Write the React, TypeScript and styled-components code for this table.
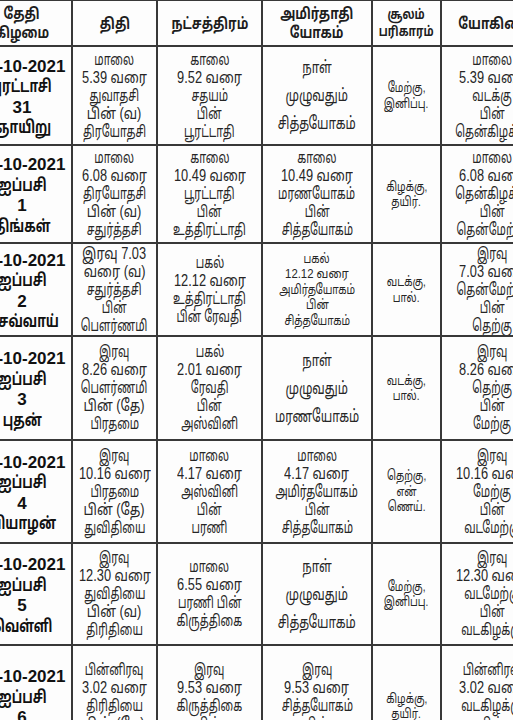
import { FC } from 'react';
import styled, { createGlobalStyle } from 'styled-components';

type Size = 'sm' | 'md' | 'lg';

interface CellText {
  lines: string[];
  size?: Size;
}

interface Day {
  date: string[];
  thithi: CellText;
  star: CellText;
  yogam: CellText;
  sulam: CellText;
  yogini: CellText;
}

const days: Day[] = [
  {
    date: ['17-10-2021', 'புரட்டாசி', '31', 'ஞாயிறு'],
    thithi: { lines: ['மாலை', '5.39 வரை', 'துவாதசி', 'பின் (வ)', 'திரயோதசி'] },
    star: { lines: ['காலை', '9.52 வரை', 'சதயம்', 'பின்', 'பூரட்டாதி'] },
    yogam: { lines: ['நாள்', 'முழுவதும்', 'சித்தயோகம்'], size: 'lg' },
    sulam: { lines: ['மேற்கு,', 'இனிப்பு.'], size: 'sm' },
    yogini: { lines: ['மாலை', '5.39 வரை', 'வடக்கு', 'பின்', 'தென்கிழக்கு'] }
  },
  {
    date: ['18-10-2021', 'ஐப்பசி', '1', 'திங்கள்'],
    thithi: { lines: ['மாலை', '6.08 வரை', 'திரயோதசி', 'பின் (வ)', 'சதுர்த்தசி'] },
    star: { lines: ['காலை', '10.49 வரை', 'பூரட்டாதி', 'பின்', 'உத்திரட்டாதி'] },
    yogam: { lines: ['காலை', '10.49 வரை', 'மரணயோகம்', 'பின்', 'சித்தயோகம்'] },
    sulam: { lines: ['கிழக்கு,', 'தயிர்.'], size: 'sm' },
    yogini: { lines: ['மாலை', '6.08 வரை', 'தென்கிழக்கு', 'பின்', 'தென்மேற்கு'] }
  },
  {
    date: ['19-10-2021', 'ஐப்பசி', '2', 'செவ்வாய்'],
    thithi: { lines: ['இரவு 7.03', 'வரை (வ)', 'சதுர்த்தசி', 'பின்', 'பௌர்ணமி'] },
    star: { lines: ['பகல்', '12.12 வரை', 'உத்திரட்டாதி', 'பின் ரேவதி'] },
    yogam: { lines: ['பகல்', '12.12 வரை', 'அமிர்தயோகம்', 'பின்', 'சித்தயோகம்'], size: 'sm' },
    sulam: { lines: ['வடக்கு,', 'பால்.'], size: 'sm' },
    yogini: { lines: ['இரவு', '7.03 வரை', 'தென்மேற்கு', 'பின்', 'தெற்கு'] }
  },
  {
    date: ['20-10-2021', 'ஐப்பசி', '3', 'புதன்'],
    thithi: { lines: ['இரவு', '8.26 வரை', 'பௌர்ணமி', 'பின் (தே)', 'பிரதமை'] },
    star: { lines: ['பகல்', '2.01 வரை', 'ரேவதி', 'பின்', 'அஸ்வினி'] },
    yogam: { lines: ['நாள்', 'முழுவதும்', 'மரணயோகம்'], size: 'lg' },
    sulam: { lines: ['வடக்கு,', 'பால்.'], size: 'sm' },
    yogini: { lines: ['இரவு', '8.26 வரை', 'தெற்கு', 'பின்', 'மேற்கு'] }
  },
  {
    date: ['21-10-2021', 'ஐப்பசி', '4', 'வியாழன்'],
    thithi: { lines: ['இரவு', '10.16 வரை', 'பிரதமை', 'பின் (தே)', 'துவிதியை'] },
    star: { lines: ['மாலை', '4.17 வரை', 'அஸ்வினி', 'பின்', 'பரணி'] },
    yogam: { lines: ['மாலை', '4.17 வரை', 'அமிர்தயோகம்', 'பின்', 'சித்தயோகம்'] },
    sulam: { lines: ['தெற்கு,', 'என்', 'ணெய்.'], size: 'sm' },
    yogini: { lines: ['இரவு', '10.16 வரை', 'மேற்கு', 'பின்', 'வடமேற்கு'] }
  },
  {
    date: ['22-10-2021', 'ஐப்பசி', '5', 'வெள்ளி'],
    thithi: { lines: ['இரவு', '12.30 வரை', 'துவிதியை', 'பின் (வ)', 'திரிதியை'] },
    star: { lines: ['மாலை', '6.55 வரை', 'பரணி பின்', 'கிருத்திகை'] },
    yogam: { lines: ['நாள்', 'முழுவதும்', 'சித்தயோகம்'], size: 'lg' },
    sulam: { lines: ['மேற்கு,', 'இனிப்பு.'], size: 'sm' },
    yogini: { lines: ['இரவு', '12.30 வரை', 'வடமேற்கு', 'பின்', 'வடகிழக்கு'] }
  },
  {
    date: ['23-10-2021', 'ஐப்பசி', '6', 'சனி'],
    thithi: { lines: ['பின்னிரவு', '3.02 வரை', 'திரிதியை', 'பின் (தே)', 'சதுர்த்தி'] },
    star: { lines: ['இரவு', '9.53 வரை', 'கிருத்திகை', 'பின்', 'ரோகிணி'] },
    yogam: { lines: ['இரவு', '9.53 வரை', 'சித்தயோகம்', 'பின்', 'மரணயோகம்'] },
    sulam: { lines: ['கிழக்கு,', 'தயிர்.'], size: 'sm' },
    yogini: { lines: ['பின்னிரவு', '3.02 வரை', 'வடகிழக்கு', 'பின்', 'கிழக்கு'] }
  }
];

// the print uses a condensed Tamil face; lines with digits are squeezed less
const hasDigits = (s: string) => /[0-9()]/.test(s);
const isLatin = (s: string) => /^[0-9\-. ]+$/.test(s);

const squeeze: Record<Size, [number, number]> = {
  sm: [0.74, 0.84],
  md: [0.68, 0.8],
  lg: [0.7, 0.8]
};

const TextCell: FC<{ cell: CellText }> = ({ cell }) => {
  const size = cell.size ?? 'md';
  return (
    <Cell $size={size}>
      {cell.lines.map((l, i) => (
        <Line key={i} $squeeze={squeeze[size][hasDigits(l) ? 1 : 0]}>{l}</Line>
      ))}
    </Cell>
  );
};

const App: FC = () => {
  return (
    <>
      <GlobalStyle />
      <Page>
        <Table>
          <HeadCell>
            <Line $squeeze={0.8}>தேதி</Line>
            <Line $squeeze={0.8}>கிழமை</Line>
          </HeadCell>
          <HeadCell>
            <Line $squeeze={0.8}>திதி</Line>
          </HeadCell>
          <HeadCell>
            <Line $squeeze={0.8}>நட்சத்திரம்</Line>
          </HeadCell>
          <HeadCell>
            <Line $squeeze={0.8}>அமிர்தாதி</Line>
            <Line $squeeze={0.8}>யோகம்</Line>
          </HeadCell>
          <HeadCell $small>
            <Line $squeeze={0.8}>சூலம்</Line>
            <Line $squeeze={0.8}>பரிகாரம்</Line>
          </HeadCell>
          <HeadCell>
            <Line $squeeze={0.8}>யோகினி</Line>
          </HeadCell>

          {days.map((d) => (
            <Row key={d.date[0]}>
              <DateCell>
                {d.date.map((l, i) => (
                  <Line key={i} $squeeze={isLatin(l) ? 1 : 0.74}>{l}</Line>
                ))}
              </DateCell>
              <TextCell cell={d.thithi} />
              <TextCell cell={d.star} />
              <TextCell cell={d.yogam} />
              <TextCell cell={d.sulam} />
              <TextCell cell={d.yogini} />
            </Row>
          ))}
        </Table>
      </Page>
    </>
  );
};

const GlobalStyle = createGlobalStyle`
  html, body {
    margin: 0;
    padding: 0;
    background: #fdfdfd;
  }
  body {
    font-family: "Liberation Sans", "Noto Sans Tamil", "Noto Sans", sans-serif;
    color: #1c1c1c;
  }
`;

const Page = styled.div`
  width: 513px;
  height: 720px;
  overflow: hidden;
  background: #fdfdfd;
`;

const Table = styled.div`
  display: grid;
  grid-template-columns: 98px 83px 103px 108px 67px 100px;
  grid-template-rows: 44px 97px 96px 91px 102px 101px 100px 120px;
  gap: 2px;
  padding: 1px 2px 2px;
  margin-left: -29px;
  width: max-content;
  background: #383838;
`;

const Row = styled.div`
  display: contents;
`;

const BaseCell = styled.div`
  display: flex;
  flex-direction: column;
  align-items: center;
  justify-content: center;
  text-align: center;
  background: #fdfdfd;
  white-space: nowrap;
  overflow: hidden;
`;

const Line = styled.span<{ $squeeze: number }>`
  display: inline-block;
  transform-origin: 50% 50%;
  transform: scale(${(p) => p.$squeeze}, 1);
`;

const HeadCell = styled(BaseCell)<{ $small?: boolean }>`
  font-weight: bold;
  font-size: ${(p) => (p.$small ? '13.5px' : '15.5px')};
  line-height: ${(p) => (p.$small ? '17px' : '19px')};
  color: #1e1e1e;
`;

const DateCell = styled(BaseCell)`
  font-weight: bold;
  font-size: 17px;
  line-height: 20.5px;
  color: #111;
  padding-top: 4px;
`;

const sizes: Record<Size, { font: string; line: string; gap: string }> = {
  sm: { font: '13.5px', line: '15.5px', gap: '0px' },
  md: { font: '16px', line: '18px', gap: '0px' },
  lg: { font: '17px', line: '19px', gap: '9px' }
};

const Cell = styled(BaseCell)<{ $size: Size }>`
  font-size: ${(p) => sizes[p.$size].font};
  line-height: ${(p) => sizes[p.$size].line};
  gap: ${(p) => sizes[p.$size].gap};
  color: #262626;
`;

export default App;
